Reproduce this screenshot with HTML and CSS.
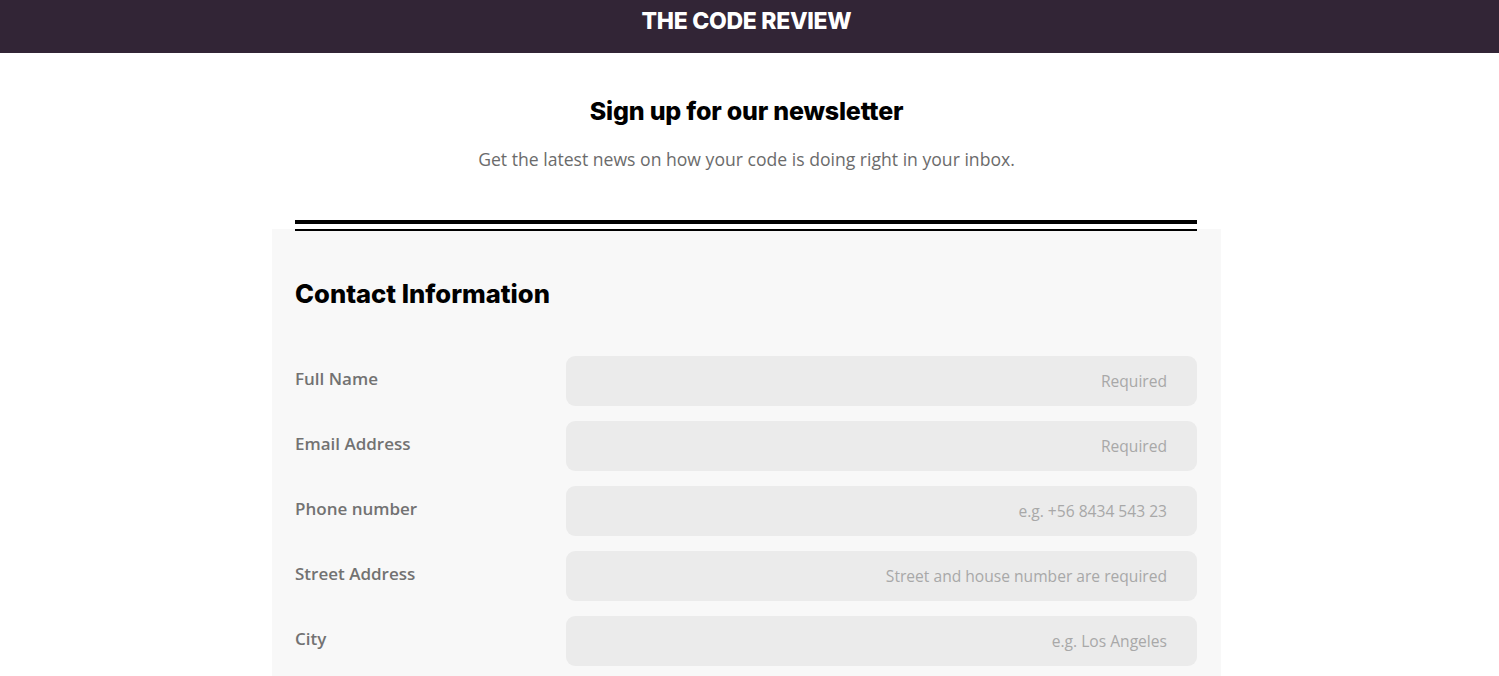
FILE: index.html
```html
<!DOCTYPE html>
<html lang="en">
<head>
<meta charset="utf-8">
<title>The Code Review</title>
<link rel="stylesheet" href="styles.css">
</head>
<body>
<header class="topbar">
  <h1 class="brand">THE CODE REVIEW</h1>
</header>
<main class="page">
  <section class="intro">
    <h2 class="intro-title">Sign up for our newsletter</h2>
    <p class="intro-text">Get the latest news on how your code is doing right in your inbox.</p>
  </section>
  <form class="card">
    <div class="rule rule-thick"></div>
    <div class="rule rule-thin"></div>
    <h3 class="card-title">Contact Information</h3>
    <div class="fields">
      <div class="field">
        <label class="field-label" for="name">Full Name</label>
        <input class="field-input" id="name" type="text" placeholder="Required">
      </div>
      <div class="field">
        <label class="field-label" for="email">Email Address</label>
        <input class="field-input" id="email" type="email" placeholder="Required">
      </div>
      <div class="field">
        <label class="field-label" for="phone">Phone number</label>
        <input class="field-input" id="phone" type="tel" placeholder="e.g. +56 8434 543 23">
      </div>
      <div class="field">
        <label class="field-label" for="street">Street Address</label>
        <input class="field-input" id="street" type="text" placeholder="Street and house number are required">
      </div>
      <div class="field">
        <label class="field-label" for="city">City</label>
        <input class="field-input" id="city" type="text" placeholder="e.g. Los Angeles">
      </div>
    </div>
  </form>
</main>
</body>
</html>
```

FILE: styles.css
```css
* { box-sizing: border-box; }
html, body { margin: 0; padding: 0; }
body {
  background: #ffffff;
  font-family: "Open Sans", "Liberation Sans", sans-serif;
  overflow: hidden;
}
.topbar {
  height: 53px;
  background: #322536;
  display: flex;
  justify-content: center;
  padding-right: 6px;
}
.brand {
  margin: 0;
  padding-top: 6px;
  color: #ffffff;
  font-family: Inter, "Liberation Sans", sans-serif;
  font-weight: 800;
  font-size: 23px;
  line-height: 30px;
  letter-spacing: -0.3px;
}
.page {
  width: calc(100% - 6px);
  display: flex;
  flex-direction: column;
  align-items: center;
}
.intro {
  text-align: center;
  padding-top: 40px;
}
.intro-title {
  margin: 0;
  font-family: Inter, "Liberation Sans", sans-serif;
  font-weight: 800;
  font-size: 25px;
  line-height: 36px;
  color: #000;
  letter-spacing: -0.2px;
}
.intro-text {
  margin: 18px 0 0;
  font-size: 17.6px;
  line-height: 24px;
  color: #6b6b6b;
}
.card {
  margin-top: 49px;
  width: 949px;
  background: linear-gradient(#fff 0, #fff 9px, #f8f8f8 9px);
  padding: 0 24px 20px 23px;
}
.rule { background: #000; }
.rule-thick { height: 4px; }
.rule-thin { height: 2px; margin-top: 5px; }
.card-title {
  margin: 45px 0 0;
  font-family: Inter, "Liberation Sans", sans-serif;
  font-weight: 800;
  font-size: 25.6px;
  line-height: 36px;
  color: #000;
  letter-spacing: 0;
}
.fields {
  margin-top: 44px;
  display: flex;
  flex-direction: column;
  gap: 15px;
}
.field {
  display: flex;
  align-items: center;
}
.field-label {
  width: 271px;
  flex: none;
  font-size: 17px;
  font-weight: 600;
  color: #727272;
  margin-top: -6px;
}
.field-input {
  flex: 1;
  height: 50px;
  border: none;
  border-radius: 9px;
  background: #ebebeb;
  padding: 0 30px 0 16px;
  text-align: right;
  font-family: "Open Sans", "Liberation Sans", sans-serif;
  font-size: 15.6px;
  color: #333;
  outline: none;
}
.field-input::placeholder { color: #a8a8a8; }
```
